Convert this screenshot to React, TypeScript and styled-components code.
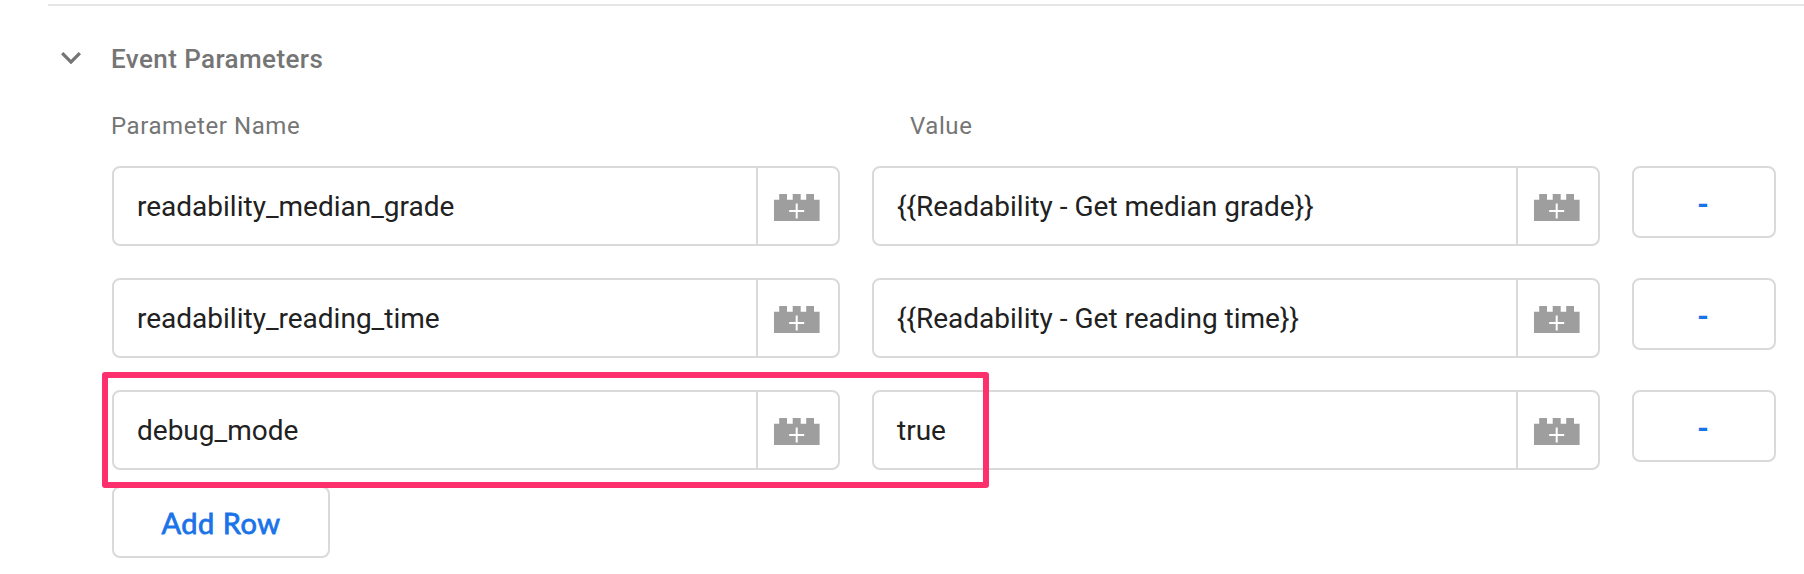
import React from "react";
import styled, { createGlobalStyle } from "styled-components";

const GlobalStyle = createGlobalStyle`
  *, *::before, *::after { box-sizing: border-box; }
  body {
    margin: 0;
    background: #fff;
    font-family: Roboto, "Liberation Sans", sans-serif;
    overflow: hidden;
  }
`;

const Page = styled.main`
  height: 574px;
  padding: 4px 0 0 48px;
  overflow: hidden;
`;

const Section = styled.section`
  border-top: 2px solid #e6e6e6;
  padding: 33px 28px 0 64px;
`;

const Header = styled.header`
  display: flex;
  align-items: center;
  height: 40px;
  margin-left: -64px;
`;

const Toggle = styled.button`
  width: 63px;
  height: 40px;
  padding: 0 0 2px 13px;
  border: 0;
  background: none;
  display: flex;
  align-items: center;
`;

const Title = styled.h2`
  margin: 0;
  font-size: 26px;
  font-weight: 500;
  line-height: 40px;
  letter-spacing: 0.42px;
  color: #757575;
`;

const columns = "728px 728px 144px";

const Labels = styled.div`
  display: grid;
  grid-template-columns: ${columns};
  column-gap: 32px;
  margin: 27px 0 0 -1px;
  height: 60px;
`;

const Label = styled.span<{ $inset?: number }>`
  padding-left: ${(p) => p.$inset ?? 0}px;
  font-size: 24px;
  line-height: 40px;
  letter-spacing: 0.58px;
  color: #757575;
`;

const Rows = styled.div`
  position: relative;
  display: grid;
  row-gap: 32px;
`;

const Row = styled.div`
  display: grid;
  grid-template-columns: ${columns};
  column-gap: 32px;
  align-items: start;
`;

const Field = styled.div`
  display: flex;
  height: 80px;
  border: 2px solid #dadada;
  border-radius: 8px;
`;

const FieldText = styled.div`
  flex: 1;
  padding-left: 23px;
  font-size: 28px;
  line-height: 77px;
  white-space: pre;
  color: #212121;
`;

const VariablePicker = styled.button`
  width: 82px;
  padding: 4px 0 0 16px;
  border: 0;
  border-left: 2px solid #dadada;
  background: none;
  display: flex;
  align-items: center;
`;

const OutlineButton = styled.button`
  display: flex;
  align-items: center;
  justify-content: center;
  height: 72px;
  border: 2px solid #dadada;
  border-radius: 8px;
  background: #fff;
  color: #1a73e8;
  font-family: Lato, Roboto, sans-serif;
`;

const RemoveButton = styled(OutlineButton)`
  width: 144px;
  padding: 1px 2px 0 0;
  font-size: 32px;
  font-weight: 700;
  line-height: 60px;
`;

const AddButton = styled(OutlineButton)`
  width: 218px;
  margin-top: 16px;
  padding: 2px 0 0;
  font-size: 29px;
  font-weight: 400;
  -webkit-text-stroke: 0.8px #1a73e8;
  letter-spacing: 0.5px;
  line-height: 60px;
`;

const Highlight = styled.div`
  position: absolute;
  left: -10px;
  top: 206px;
  width: 887px;
  height: 116px;
  border: 6px solid #fd2f6d;
  border-radius: 3px;
  pointer-events: none;
`;

const Chevron = () => (
  <svg width="20" height="12.35" viewBox="6 8.59 12 7.41">
    <path
      d="M7.41 8.59L12 13.17l4.59-4.58L18 10l-6 6-6-6 1.41-1.41z"
      fill="#757575"
    />
  </svg>
);

const Brick = () => (
  <svg width="46" height="28" viewBox="0 0 46 28">
    <path
      d="M0 5.7H5.2V0H13V5.7H18.7V0H26.7V5.7H32.2V0H40V5.7H45.6V27H0Z"
      fill="#9e9e9e"
    />
    <path d="M15.2 17H30.2M22.7 9.5V24.5" stroke="#fff" strokeWidth="2" />
  </svg>
);

const parameters = [
  { name: "readability_median_grade", value: "{{Readability - Get median grade}}" },
  { name: "readability_reading_time", value: "{{Readability - Get reading time}}" },
  { name: "debug_mode", value: "true" },
];

const VariableField = ({ text }: { text: string }) => (
  <Field>
    <FieldText>{text}</FieldText>
    <VariablePicker aria-label="Insert variable">
      <Brick />
    </VariablePicker>
  </Field>
);

export default function App() {
  return (
    <>
      <GlobalStyle />
      <Page>
        <Section>
          <Header>
            <Toggle aria-label="Collapse">
              <Chevron />
            </Toggle>
            <Title>Event Parameters</Title>
          </Header>
          <Labels>
            <Label>Parameter Name</Label>
            <Label $inset={39}>Value</Label>
          </Labels>
          <Rows>
            {parameters.map((p) => (
              <Row key={p.name}>
                <VariableField text={p.name} />
                <VariableField text={p.value} />
                <RemoveButton>-</RemoveButton>
              </Row>
            ))}
            <Highlight />
          </Rows>
          <AddButton>Add Row</AddButton>
        </Section>
      </Page>
    </>
  );
}
